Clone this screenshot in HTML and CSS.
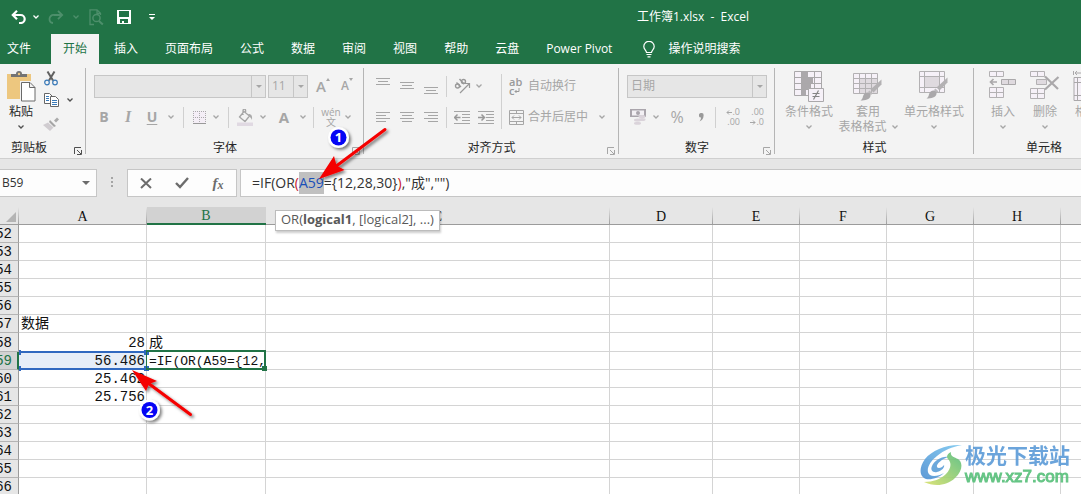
FILE: index.html
```html
<!DOCTYPE html>
<html lang="zh-CN">
<head>
<meta charset="utf-8">
<meta name="viewport" content="width=device-width, initial-scale=1">
<title>工作簿1.xlsx - Excel</title>
<link rel="stylesheet" href="styles.css">
</head>
<body>
<svg class="defs" aria-hidden="true">
  <symbol id="chev" viewBox="0 0 6 4"><path d="M.5.5 3 3 5.500.5" fill="none" stroke="currentColor" stroke-width="1.300"/></symbol>
  <symbol id="tri" viewBox="0 0 6 3"><path d="M0 0h6L3 3z" fill="currentColor"/></symbol>
  <symbol id="launch" viewBox="0 0 8 8"><path d="M.5 7V.5H7M3 3l4 4M7.500 3v4.500H3" fill="none" stroke="currentColor"/></symbol>
  <symbol id="brush" viewBox="0 0 22 22"><path d="M21.500.5v5l-8 8-3-3z" fill="#b3b1b3"/><path d="M9.500 11.500l3 3-1.500 1.500-3-3z" fill="#bcbabc"/><path d="M7.500 13.500c2 0 3.500 1.500 3 3.500-.8 3.500-5 4.500-10 4.500 2.500-1.500 2-3.500 3-5.500.8-1.500 2-2.500 4-2.500z" fill="#aaa8aa"/></symbol>
</svg>

<header class="top">
  <div class="titlebar">
    <div class="qat">
      <button class="qbtn" aria-label="撤消"><svg width="16" height="14" viewBox="0 0 16 14"><path d="M1.500 5h8.200a4 4 0 0 1 0 8H8M6 .8 1.800 5 6 9.200" fill="none" stroke="#fff" stroke-width="2.200"/></svg></button>
      <button class="qchev" aria-label="撤消选项"><svg width="6" height="4"><use href="#chev"/></svg></button>
      <button class="qbtn dim" aria-label="恢复"><svg width="16" height="14" viewBox="0 0 16 14"><path d="M14 5H6a4 4 0 0 0-4.500 4A4 4 0 0 0 5 13M10 .8 14.200 5 10 9.200" fill="none" stroke="currentColor" stroke-width="1.800"/></svg></button>
      <button class="qchev dim" aria-label="恢复选项"><svg width="6" height="4"><use href="#chev"/></svg></button>
      <button class="qbtn dim" aria-label="打印预览"><svg width="15" height="17" viewBox="0 0 15 17"><path d="M5 15.500H1V.8h7l3.500 3.500V6M8 .8v3.700h3.500" fill="none" stroke="currentColor" stroke-width="1.300"/><circle cx="7.500" cy="9" r="3.600" fill="none" stroke="currentColor" stroke-width="1.500"/><path d="M10 12l3.800 3.500" stroke="currentColor" stroke-width="2"/></svg></button>
      <button class="qbtn" aria-label="保存"><svg width="14" height="14" viewBox="0 0 14 14"><path d="M0 0h14v14H0zM2 1v6h10V1zM3 9v4h2v-2h2v2h4V9z" fill="#fff" fill-rule="evenodd"/></svg></button>
      <button class="qbtn" aria-label="自定义快速访问工具栏"><svg width="6" height="6" viewBox="0 0 6 6"><path d="M0 0h6v1H0zM0 3h6L3 6z" fill="#fff"/></svg></button>
    </div>
    <h1 class="doc">工作簿1.xlsx&nbsp; -&nbsp; Excel</h1>
  </div>
  <nav class="tabs">
    <button class="tab file">文件</button>
    <button class="tab active">开始</button>
    <button class="tab">插入</button>
    <button class="tab">页面布局</button>
    <button class="tab">公式</button>
    <button class="tab">数据</button>
    <button class="tab">审阅</button>
    <button class="tab">视图</button>
    <button class="tab">帮助</button>
    <button class="tab">云盘</button>
    <button class="tab">Power Pivot</button>
    <button class="tab tell"><svg width="12" height="17" viewBox="0 0 12 17"><path d="M3.500 11.500c0-2-2.700-3-2.700-6a5.200 5.200 0 0 1 10.400 0c0 3-2.700 4-2.700 6zM3.500 13.500h5M4.500 15.800h3" fill="none" stroke="#fff" stroke-width="1.200"/></svg>操作说明搜索</button>
  </nav>
</header>

<section class="ribbon">
  <div class="group clip">
    <div class="body row">
      <button class="big paste"><svg width="29" height="31" viewBox="0 0 29 31"><path d="M0 3h24v25H0z" fill="#edc77f"/><path d="M4 6V3h5a3 3 0 0 1 6 0h5v3z" fill="#737373"/><circle cx="12" cy="3" r="1.200" fill="#edc77f"/><path d="M13 10h11l5 5v16H13z" fill="#f3f3f3"/><path d="M14.500 11.500h8.500l5 5v13.500H14.500zM22.500 11.500v5H28" fill="#fff" stroke="#6a6a6a"/></svg><span>粘贴</span><svg class="c" width="6" height="4"><use href="#chev"/></svg></button>
      <div class="stack">
        <button class="small" aria-label="剪切"><svg width="14" height="15" viewBox="0 0 14 15"><path d="M3.500.5 9 9.500M10.500.5 5 9.500" stroke="#606060" stroke-width="2"/><circle cx="3" cy="11.500" r="2.300" fill="none" stroke="#3a7ab8" stroke-width="1.200"/><circle cx="11" cy="11.500" r="2.300" fill="none" stroke="#3a7ab8" stroke-width="1.200"/></svg></button>
        <div class="row">
          <button class="small" aria-label="复制"><svg width="15" height="14" viewBox="0 0 15 14"><path d="M.5.500h5l2.500 2.500v7.500H.5z" fill="#fff" stroke="#666"/><path d="M2 3.500h3M2 5.500h3M2 7.500h3" stroke="#3a7ab8"/><path d="M6.500 3.500h5l3 3v7h-8z" fill="#fff" stroke="#666"/><path d="M8 7.500h5M8 9.500h5M8 11.500h5" stroke="#3a7ab8"/></svg></button>
          <button class="chev dark" aria-label="复制选项"><svg width="6" height="4"><use href="#chev"/></svg></button>
        </div>
        <button class="small" aria-label="格式刷"><svg width="16" height="14" viewBox="0 0 16 14"><path d="M11 3.500 14 .5l2 2-3 3z" fill="#aaa"/><path d="M7 3l6 6-2 1-5-5z" fill="#a5a5a5"/><path d="M5 5.500l5.500 5L7 14 0 8z" fill="#d0ccd0"/></svg></button>
      </div>
    </div>
    <div class="foot"><span>剪贴板</span><button class="launcher dark" aria-label="剪贴板设置"><svg width="8" height="8"><use href="#launch"/></svg></button></div>
  </div>

  <div class="group font">
    <div class="body">
      <div class="line first">
        <div class="combo name"><input type="text" aria-label="字体" disabled><button aria-label="字体列表"><svg width="6" height="3"><use href="#tri"/></svg></button></div>
        <div class="combo size"><input type="text" aria-label="字号" value="11" disabled><button aria-label="字号列表"><svg width="6" height="3"><use href="#tri"/></svg></button></div>
        <button class="ic grow" aria-label="增大字号"><span>A</span><svg width="4" height="3" viewBox="0 0 4 3"><path d="M0 3 2 0l2 3z" fill="currentColor"/></svg></button>
        <button class="ic shrink" aria-label="减小字号"><span>A</span><svg width="4" height="3" viewBox="0 0 4 3"><path d="M0 0l2 3 2-3z" fill="currentColor"/></svg></button>
      </div>
      <div class="line">
        <button class="ic"><b>B</b></button>
        <button class="ic"><i>I</i></button>
        <button class="ic"><u>U</u></button>
        <button class="chev" aria-label="下划线选项"><svg width="6" height="4"><use href="#chev"/></svg></button>
        <span class="sep"></span>
        <button class="ic w20" aria-label="边框"><svg width="13" height="13" viewBox="0 0 13 13"><path d="M0 0h13v12H0z" fill="#f4eef6"/><path d="M0 .5h13M.5 0v12M6.500 0v12M12.500 0v12M0 6.500h13" stroke="#aaa" stroke-dasharray="1 1"/><path d="M0 12.500h13" stroke="#999"/></svg></button>
        <button class="chev" aria-label="边框选项"><svg width="6" height="4"><use href="#chev"/></svg></button>
        <span class="sep"></span>
        <button class="ic w22" aria-label="填充颜色"><svg width="17" height="17" viewBox="0 0 17 17"><path d="M7 2.500 12.500 7 8 12.500 2.500 8zM6 6V1.500a1.300 1.300 0 0 1 2.600 0V5" fill="none" stroke="#a5a5a5" stroke-width="1.300"/><path d="M11.500 5c3 0 4 2 3.500 6-1-2-2-3.500-4-4z" fill="#aaa"/><path d="M0 13.500h16V17H0z" fill="#e0d9e2"/></svg></button>
        <button class="chev" aria-label="填充颜色选项"><svg width="6" height="4"><use href="#chev"/></svg></button>
        <button class="ic w28"><span class="colorA">A</span></button>
        <button class="chev c10" aria-label="字体颜色选项"><svg width="6" height="4"><use href="#chev"/></svg></button>
        <span class="sep"></span>
        <button class="ic pinyin"><span>wén</span><span>文</span></button>
        <button class="chev c10" aria-label="拼音选项"><svg width="6" height="4"><use href="#chev"/></svg></button>
      </div>
    </div>
    <div class="foot"><span>字体</span><button class="launcher" aria-label="字体设置"><svg width="8" height="8"><use href="#launch"/></svg></button></div>
  </div>

  <div class="group align">
    <div class="body row">
      <div>
        <div class="line first">
          <button class="ic" aria-label="顶端对齐"><svg width="14" height="17" viewBox="0 0 14 17"><path d="M0 .5h14M2 3.500h10M0 6.500h14" stroke="currentColor"/></svg></button>
          <button class="ic" aria-label="垂直居中"><svg width="14" height="17" viewBox="0 0 14 17"><path d="M0 4.500h14M2 7.500h10M0 10.500h14" stroke="currentColor"/></svg></button>
          <button class="ic" aria-label="底端对齐"><svg width="14" height="17" viewBox="0 0 14 17"><path d="M0 9.500h14M2 12.500h10M0 15.500h14" stroke="currentColor"/></svg></button>
          <span class="sep s7"></span>
          <button class="ic" aria-label="方向"><svg width="17" height="16" viewBox="0 0 17 16"><circle cx="3.500" cy="8" r="2" fill="none" stroke="#999" stroke-width="1.400"/><path d="M2.500 4.500 7 9M5.500 1 10 6" stroke="#999" stroke-width="1.400"/><circle cx="9.500" cy="3.500" r="2" fill="none" stroke="#999" stroke-width="1.400"/><path d="M6 15 15 6M11 5.500h4.500V10" fill="none" stroke="#999" stroke-width="1.200"/></svg></button>
          <button class="chev c10" aria-label="方向选项"><svg width="6" height="4"><use href="#chev"/></svg></button>
        </div>
        <div class="line">
          <button class="ic" aria-label="左对齐"><svg width="14" height="11" viewBox="0 0 14 11"><path d="M0 .5h14M0 3.500h10M0 6.500h14M0 9.500h10" stroke="currentColor"/></svg></button>
          <button class="ic" aria-label="居中"><svg width="14" height="11" viewBox="0 0 14 11"><path d="M0 .5h14M2 3.500h10M0 6.500h14M2 9.500h10" stroke="currentColor"/></svg></button>
          <button class="ic" aria-label="右对齐"><svg width="14" height="11" viewBox="0 0 14 11"><path d="M0 .5h14M4 3.500h10M0 6.500h14M4 9.500h10" stroke="currentColor"/></svg></button>
          <span class="sep s7"></span>
          <button class="ic" aria-label="减少缩进"><svg width="16" height="13" viewBox="0 0 16 13"><path d="M0 .5h16M8 3.500h8M8 6.500h8M8 9.500h8M0 12.500h16" stroke="currentColor"/><path d="M6.500 6.500H1M3.500 3.500l-3 3 3 3" fill="none" stroke="#999" stroke-width="1.500"/></svg></button>
          <button class="ic" aria-label="增加缩进"><svg width="16" height="13" viewBox="0 0 16 13"><path d="M0 .5h16M8 3.500h8M8 6.500h8M8 9.500h8M0 12.500h16" stroke="currentColor"/><path d="M0 6.500h6M3.500 3.500l3 3-3 3" fill="none" stroke="#999" stroke-width="1.500"/></svg></button>
        </div>
      </div>
      <span class="sep s7 tall"></span>
      <div>
        <div class="line first"><button class="text"><span class="wrap"><span>ab</span><span class="row">c<svg width="6" height="8" viewBox="0 0 6 8"><path d="M5 2v3.500H1M2.500 4 1 5.500 2.500 7" fill="none" stroke="currentColor"/></svg></span></span><span>自动换行</span></button></div>
        <div class="line"><button class="text"><svg width="15" height="15" viewBox="0 0 15 15"><path d="M.5.500h14v14H.5zM.5 3.500h14M.5 11.500h14M7.500.5v3M7.500 11.500v3M3 7.500h9M5 5.500l-2 2 2 2M10 5.500l2 2-2 2" fill="none" stroke="currentColor"/></svg><span>合并后居中</span></button><button class="chev wide" aria-label="合并选项"><svg width="6" height="4"><use href="#chev"/></svg></button></div>
      </div>
    </div>
    <div class="foot"><span>对齐方式</span><button class="launcher" aria-label="对齐设置"><svg width="8" height="8"><use href="#launch"/></svg></button></div>
  </div>

  <div class="group number">
    <div class="body">
      <div class="line first">
        <div class="combo fmt"><input type="text" aria-label="数字格式" value="日期" disabled><button aria-label="数字格式列表"><svg width="6" height="3"><use href="#tri"/></svg></button></div>
      </div>
      <div class="line">
        <button class="ic w22" aria-label="会计数字格式"><svg width="16" height="16" viewBox="0 0 16 16"><path d="M0 0h16v8H0z" fill="#aaa5ac"/><path d="M2 1.500h12v5H2z" fill="#f3f0f4"/><circle cx="8" cy="4" r="2" fill="#aaa5ac"/><ellipse cx="12" cy="7.500" rx="3.500" ry="1.500" fill="#dad3da"/><ellipse cx="12" cy="10.500" rx="3.500" ry="1.500" fill="#dad3da"/><ellipse cx="7.500" cy="11" rx="3.500" ry="1.500" fill="#dad3da"/><ellipse cx="7.500" cy="14.200" rx="3.500" ry="1.500" fill="#dad3da"/></svg></button>
        <button class="chev" aria-label="会计格式选项"><svg width="6" height="4"><use href="#chev"/></svg></button>
        <button class="ic w28"><span class="pct">%</span></button>
        <button class="ic w20" aria-label="千位分隔样式"><svg width="5" height="9" viewBox="0 0 5 9"><path d="M2.300 0A2.200 2.200 0 0 1 4.600 2.500C4.600 5.500 3 7.500.5 8.500 1.500 7 2 6 2 4.500A2.200 2.200 0 0 1 2.300 0z" fill="#999"/></svg></button>
        <span class="sep s9"></span>
        <button class="ic dec" aria-label="增加小数位数"><span class="row"><svg width="6" height="10" viewBox="0 0 6 10"><path d="M6 5.500H1M3 3.500l-2 2 2 2" fill="none" stroke="currentColor"/></svg>.0</span><span>.00</span></button>
        <button class="ic dec" aria-label="减少小数位数"><span>.00</span><span class="row"><svg width="6" height="10" viewBox="0 0 6 10"><path d="M0 5.500h5M3 3.500l2 2-2 2" fill="none" stroke="currentColor"/></svg>.0</span></button>
      </div>
    </div>
    <div class="foot"><span>数字</span><button class="launcher" aria-label="数字设置"><svg width="8" height="8"><use href="#launch"/></svg></button></div>
  </div>

  <div class="group styles">
    <div class="body row">
      <button class="big cond"><svg width="30" height="31" viewBox="0 0 30 31"><path d="M.5.500h27v24H.5z" fill="#f6f1f8"/><path d="M7 0h7v6H7zM7 6h12v6H7zM7 12h10v6H7zM7 18h5v7H7z" fill="#aba8ab"/><path d="M.5.500h27v24H.5zM7.500 0v25M20.500 0v25M0 6.500h28M0 12.500h28M0 18.500h28" fill="none" stroke="#aaa8aa"/><path d="M14.500 17.500h15v13h-15z" fill="#f6f1f8" stroke="#aaa8aa"/><path d="M18.500 22.500h7M18.500 25.500h7M24.500 19.500l-5 9" stroke="#858585" stroke-width="1.200"/></svg><span>条件格式</span><svg class="c" width="6" height="4"><use href="#chev"/></svg></button>
      <button class="big tabl"><svg width="30" height="31" viewBox="0 0 30 31"><path d="M.5 2.500h24v20H.5z" fill="#f6f1f8"/><path d="M6 7h19v15H6z" fill="#dfdadf"/><path d="M.5 2.500h24v20H.5zM6.500 2v20M12.500 2v20M18.500 2v20M0 7.500h25M0 12.500h25M0 17.500h25" fill="none" stroke="#b3b1b3"/><use href="#brush" x="7" y="8" width="22" height="22"/></svg><span>套用</span><span class="row">表格格式<svg class="c2" width="6" height="4"><use href="#chev"/></svg></span></button>
      <button class="big cell"><svg width="30" height="31" viewBox="0 0 30 31"><path d="M.5.500h25v21H.5z" fill="#f6f1f8"/><path d="M6 5h15v11H6z" fill="#dfdadf"/><path d="M.5.500h25v21H.5zM5.500 0v22M20.500 0v22M0 5.500h26M0 16.500h26" fill="none" stroke="#b3b1b3"/><use href="#brush" x="7" y="6" width="22" height="22"/></svg><span>单元格样式</span><svg class="c" width="6" height="4"><use href="#chev"/></svg></button>
    </div>
    <div class="foot"><span>样式</span></div>
  </div>

  <div class="group cells">
    <div class="body row">
      <button class="big cl"><svg width="28" height="31" viewBox="0 0 28 31"><path d="M.5.500h14v5H.5zM7.500.5v5M.5 16.500h14v10H.5zM7.500 16.500v10M.5 21.500h14" fill="#f6f1f8" stroke="#b3b1b3"/><path d="M12.500 8.500h14v5h-14zM19.500 8.500v5" fill="#dfdadf" stroke="#aaa8aa"/><path d="M8 11H2M4.500 8l-3 3 3 3" fill="none" stroke="#aaa8aa" stroke-width="1.700"/></svg><span>插入</span><svg class="c" width="6" height="4"><use href="#chev"/></svg></button>
      <button class="big cl"><svg width="30" height="31" viewBox="0 0 30 31"><path d="M.5.500h14v5H.5zM7.500.5v5M.5 17.500h14v10H.5zM7.500 17.500v10M.5 22.500h14" fill="#f6f1f8" stroke="#b3b1b3"/><path d="M6.500 8.500h10v5h-10z" fill="#dfdadf" stroke="#b3b1b3"/><path d="M15 5.500 28 18M28.500 6 15 18.500" stroke="#aaa8aa" stroke-width="2.200"/></svg><span>删除</span><svg class="c" width="6" height="4"><use href="#chev"/></svg></button>
      <button class="big cl"><svg width="28" height="31" viewBox="0 0 28 31"><path d="M.5 0v4M27.500 0v4M2 2h24M4 0 2 2l2 2" fill="none" stroke="#aaa8aa"/><path d="M1 6.500h26v23H1zM4.500 6.500v23M1 11.500h26M1 24.500h26" fill="#f6f1f8" stroke="#aaa8aa"/></svg><span>格式</span><svg class="c" width="6" height="4"><use href="#chev"/></svg></button>
    </div>
    <div class="foot"><span>单元格</span></div>
  </div>
</section>

<section class="fbar">
  <div class="namebox"><input type="text" value="B59" aria-label="名称框"><button aria-label="名称列表"><svg width="8" height="4" viewBox="0 0 6 3"><path d="M0 0h6L3 3z" fill="currentColor"/></svg></button></div>
  <svg class="dots" width="2" height="12" viewBox="0 0 2 12"><path d="M0 0h2v2H0zM0 4h2v2H0zM0 8h2v2H0z" fill="#a5a5a5"/></svg>
  <div class="fbtns">
    <button aria-label="取消"><svg width="12" height="11" viewBox="0 0 12 11"><path d="M1 .5 11 10M11 .5 1 10" stroke="#6c6c6c" stroke-width="2"/></svg></button>
    <button aria-label="输入"><svg width="14" height="12" viewBox="0 0 14 12"><path d="M1 6l4 4L13 1" fill="none" stroke="#6c6c6c" stroke-width="2.400"/></svg></button>
    <button class="fx" aria-label="插入函数"><i>f</i><i class="x">x</i></button>
  </div>
  <div class="formula" role="textbox" aria-label="编辑栏" contenteditable="true" spellcheck="false">=IF(OR<span class="red">(</span><span class="ref">A59</span>={12,28,30}<span class="red">)</span>,"成","")</div>
</section>

<main class="sheet">
  <table class="grid">
    <colgroup><col class="c0"><col class="ca"><col class="cb"><col class="cc"><col class="cd"><col class="ce"><col class="ce"><col class="ce"><col class="ce"><col class="ce"></colgroup>
    <thead><tr><th class="corner"><svg width="10" height="10" viewBox="0 0 10 10"><path d="M10 0v10H0z" fill="#b4b4b4"/></svg></th><th>A</th><th class="on">B</th><th>C</th><th>D</th><th>E</th><th>F</th><th>G</th><th>H</th><th>I</th></tr></thead>
    <tbody>
      <tr><th><span>52</span></th><td></td><td></td><td></td><td></td><td></td><td></td><td></td><td></td><td></td></tr>
      <tr><th><span>53</span></th><td></td><td></td><td></td><td></td><td></td><td></td><td></td><td></td><td></td></tr>
      <tr><th><span>54</span></th><td></td><td></td><td></td><td></td><td></td><td></td><td></td><td></td><td></td></tr>
      <tr><th><span>55</span></th><td></td><td></td><td></td><td></td><td></td><td></td><td></td><td></td><td></td></tr>
      <tr><th><span>56</span></th><td></td><td></td><td></td><td></td><td></td><td></td><td></td><td></td><td></td></tr>
      <tr><th><span>57</span></th><td>数据</td><td></td><td></td><td></td><td></td><td></td><td></td><td></td><td></td></tr>
      <tr class="r58"><th><span>58</span></th><td class="num">28</td><td>成</td><td></td><td></td><td></td><td></td><td></td><td></td><td></td></tr>
      <tr><th class="on"><span>59</span></th><td class="num source">56.486<span class="refbox"><i></i><i></i><i></i><i></i></span></td><td class="edit">=IF(OR(A59={12,<span class="cursor"></span></td><td></td><td></td><td></td><td></td><td></td><td></td><td></td></tr>
      <tr><th><span>60</span></th><td class="num">25.462</td><td></td><td></td><td></td><td></td><td></td><td></td><td></td><td></td></tr>
      <tr><th><span>61</span></th><td class="num">25.756</td><td></td><td></td><td></td><td></td><td></td><td></td><td></td><td></td></tr>
      <tr><th><span>62</span></th><td></td><td></td><td></td><td></td><td></td><td></td><td></td><td></td><td></td></tr>
      <tr><th><span>63</span></th><td></td><td></td><td></td><td></td><td></td><td></td><td></td><td></td><td></td></tr>
      <tr><th><span>64</span></th><td></td><td></td><td></td><td></td><td></td><td></td><td></td><td></td><td></td></tr>
      <tr><th><span>65</span></th><td></td><td></td><td></td><td></td><td></td><td></td><td></td><td></td><td></td></tr>
      <tr><th><span>66</span></th><td></td><td></td><td></td><td></td><td></td><td></td><td></td><td></td><td></td></tr>
    </tbody>
  </table>
  <div class="brand">
    <svg width="43" height="42" viewBox="0 0 43 42">
      <defs><linearGradient id="g1" x1="1" y1="0" x2="0" y2="1"><stop offset="0" stop-color="#7cc8f0"/><stop offset="1" stop-color="#4d8fd2"/></linearGradient><linearGradient id="g2" x1="1" y1="0" x2="0" y2="1"><stop offset="0" stop-color="#55bd7c"/><stop offset="1" stop-color="#d9e06a"/></linearGradient></defs>
      <path d="M42 1C27 0 12 6 5 15-2 25 0 33 6 35c5 1.500 14-2 18-6-5 3-11 4-14 2-5-4-1-13 7-19C24 6 32 3 42 1z" fill="url(#g1)"/>
      <path d="M28 13c-6-1-14 4-16 9-2 4 1 7 5 6 5-1 8-5 7-7-2 3-6 4-7 2-1-3 5-8 11-10z" fill="#5c9fd8"/>
      <path d="M31 8c-4 2-5 5-3 7 4 4 3 10-2 15-5 5-13 8-22 8 10 5 23 4 31-4 8-7 8-16 3-19-4-2-8-3-7-7z" fill="url(#g2)"/>
    </svg>
    <div><strong>极光下载站</strong><span>www.xz7.com</span></div>
  </div>
</main>

<div class="tip">OR(<b>logical1</b>, [logical2], ...)</div>
<svg class="marks" width="400" height="430" viewBox="0 0 400 430" aria-hidden="true">
  <defs><filter id="sh" x="-20%" y="-20%" width="150%" height="150%"><feDropShadow dx="2" dy="2" stdDeviation="1.500" flood-opacity=".5"/></filter></defs>
  <g filter="url(#sh)">
    <path d="M385 129.500 335 167" stroke="#f50400" stroke-width="3" stroke-linecap="round"/>
    <path d="M319 179 334 156 336.500 165.500 344.500 170z" fill="#f50400"/>
    <path d="M190.500 414.500 148 383" stroke="#f50400" stroke-width="3" stroke-linecap="round"/>
    <path d="M132 370 157 381 149 384 146 391z" fill="#f50400"/>
    <circle cx="338.500" cy="137.500" r="10.500" fill="#fff"/><circle cx="149.500" cy="410" r="10.500" fill="#fff"/>
  </g>
  <circle cx="338.500" cy="137.500" r="8" fill="#0505f5"/><circle cx="149.500" cy="410" r="8" fill="#0505f5"/>
  <text class="n" x="338.500" y="142">1</text><text class="n" x="149.500" y="415">2</text>
</svg>
</body>
</html>
```
FILE: styles.css
```css
* { box-sizing: border-box; }
body {
  margin: 0;
  height: 100vh;
  position: relative;
  display: flex;
  flex-direction: column;
  overflow: hidden;
  background: #fff;
  color: #262626;
  font: 12px/16px "Open Sans", "Noto Sans CJK SC", sans-serif;
}
button, input { font: inherit; color: inherit; border: 0; padding: 0; margin: 0; background: none; border-radius: 0; }
button { display: flex; align-items: center; justify-content: center; flex: none; }
svg { display: block; flex: none; }
.defs { position: absolute; width: 0; height: 0; }
.row { display: flex; }

.top { background: #217346; color: #fff; flex: none; }
.titlebar { display: flex; align-items: center; height: 34px; }
.qat { display: flex; align-items: center; padding-left: 8px; }
.qbtn { width: 28px; height: 24px; }
.qbtn:first-child { width: 22px; }
.qchev { width: 12px; height: 24px; }
.dim { color: #4d8f6b; }
.doc { margin: 0 332px 0 auto; font-size: 12px; font-weight: 400; }
.tabs { display: flex; gap: 3px; height: 30px; }
.tab { padding: 0 12px; white-space: nowrap; }
.tab.file { padding: 0 17px 0 7px; }
.tab.active { background: #f3f3f3; color: #217346; }
.tab.tell { gap: 13px; padding-left: 16px; }

.ribbon { display: flex; flex: none; background: #f3f3f3; border-bottom: 1px solid #cfcfcf; overflow: hidden; color: #a6a6a6; }
.group { position: relative; flex: none; display: flex; flex-direction: column; padding: 7px 0 1px; }
.group::after { content: ""; position: absolute; right: 0; top: 4px; bottom: 4px; width: 1px; background: #b5b5b5; }
.body { height: 66px; }
.foot { height: 20px; padding-top: 1px; display: flex; align-items: center; justify-content: center; color: #262626; position: relative; }
.launcher { position: absolute; right: 4px; bottom: 2px; width: 8px; height: 8px; color: #a6a6a6; }
.dark { color: #505050; }
.clip { width: 86px; }
.font { width: 278px; }
.align { width: 255px; }
.number { width: 156px; }
.styles { width: 199px; }
.cells { width: 140px; }

.big { flex-direction: column; justify-content: flex-start; height: 66px; white-space: nowrap; line-height: 15px; }
.big > svg:first-child { margin-bottom: 2px; }
.big .c { margin-top: 6px; }
.c2 { margin: 6px 0 0 5px; }
.paste { width: 38px; color: #262626; }
.paste .c { color: #505050; }
.clip .foot { padding-right: 28px; }
.clip .body { padding-left: 2px; }
.stack { display: grid; grid-template-rows: 14px 30px 17px; align-items: center; }
.small { width: 22px; }
.stack .chev { width: 16px; }
.line { display: flex; align-items: center; height: 22px; }
.line.first { margin: 4px 0 9px; }
.font .line { padding-left: 6px; }
.font .line.first { padding-left: 8px; }
.ic { width: 24px; height: 22px; font-size: 14px; }
.ic u { text-underline-offset: 2px; }
.ic b, .ic u, .colorA { font-weight: 700; }
.ic i { font-family: "Liberation Serif", serif; font-size: 16px; font-weight: 700; }
.colorA { font-size: 15px; }
.w20 { width: 20px; }
.w22 { width: 22px; }
.w28 { width: 28px; }
.chev { width: 14px; height: 22px; }
.chev.c10 { width: 10px; }
.chev.wide { width: 28px; }
.sep { width: 11px; height: 21px; flex: none; background: linear-gradient(#d0d0d0, #d0d0d0) center / 1px 100% no-repeat; }
.s7 { width: 7px; }
.s9 { width: 9px; }
.tall { height: 55px; margin-top: 3px; }
.combo { display: flex; height: 23px; border: 1px solid #c6c6c6; background: #e6e6e6; }
.combo input { flex: 1; min-width: 0; padding-left: 3px; color: #a6a6a6; }
.combo button { width: 14px; border-left: 1px solid #c6c6c6; }
.name { width: 172px; margin-right: 2px; }
.size { width: 40px; margin-right: 3px; }
.fmt { width: 140px; }
.grow, .shrink { align-items: flex-start; line-height: 22px; font-weight: 600; }
.grow { font-size: 15px; }
.shrink { font-size: 12px; }
.grow svg, .shrink svg { margin-top: 3px; }
.pinyin, .dec { flex-direction: column; font-size: 10px; line-height: 10px; }
.dec { font-size: 9px; align-items: flex-end; padding-right: 4px; }
.pct { font-size: 16px; }
.align .body { padding-left: 7px; }
.wrap { display: flex; flex-direction: column; align-items: flex-start; width: 15px; font-size: 11px; font-weight: 600; line-height: 9px; color: #999; }
.text { gap: 4px; padding-left: 4px; height: 22px; }
.number .body { padding-left: 8px; }
.styles .body { padding-left: 7px; }
.cond { width: 54px; }
.tabl { width: 64px; }
.cell { width: 68px; }
.cells .body { padding-left: 8px; }
.cl { width: 42px; }

.fbar { display: flex; align-items: center; height: 48px; flex: none; background: #e6e6e6; padding: 10px 0; color: #333; }
.namebox, .fbtns, .formula { height: 28px; background: #fdfdfd; border: 1px solid #c6c6c6; display: flex; align-items: center; }
.namebox { width: 97px; border-left: 0; }
.namebox input { flex: 1; min-width: 0; padding-left: 2px; }
.namebox button { width: 20px; height: 26px; color: #6c6c6c; }
.dots { margin: 0 14px; }
.fbtns { width: 110px; margin-right: 3px; }
.fbtns button { width: 36px; height: 26px; }
.fx i { font: italic 700 15px/20px "Liberation Serif", serif; color: #6c6c6c; }
.fx .x { font-size: 12px; padding-top: 4px; }
.formula { flex: 1; border-right: 0; padding-left: 11px; font-size: 14px; white-space: pre; }
.ref { background: #c0c0c0; color: #1a4fb8; line-height: 22px; }
.red { color: #c8202c; }

.sheet { position: relative; flex: 1; min-height: 0; overflow: hidden; }
.grid { table-layout: fixed; width: 1148px; border-collapse: separate; border-spacing: 0; font-family: "Liberation Mono", "Noto Sans CJK SC", monospace; font-size: 14px; line-height: 17px; color: #111; }
.c0 { width: 19px; }
.ca { width: 128px; }
.cb { width: 119px; }
.cc { width: 344px; }
.cd { width: 103px; }
.ce { width: 87px; }
.grid tr { height: 18px; }
.grid .r58 { height: 19px; }
.grid th, .grid td { padding: 0; height: 17px; border-right: 1px solid #d4d4d4; border-bottom: 1px solid #d4d4d4; font-weight: 400; white-space: nowrap; }
.grid td { padding: 2px 1px 0 2px; line-height: 15px; text-align: left; vertical-align: bottom; }
.grid thead th { background: linear-gradient(#e6e6e6, #a0a0a0) right / 1px 100% no-repeat #e6e6e6; border-right: 0; border-bottom-color: #9b9b9b; font-family: "Liberation Serif", serif; line-height: 15px; padding: 2px 1px 0 0; }
.grid thead .on { background: #d2d2d2; color: #217346; border-bottom: 2px solid #217346; line-height: 14px; }
.grid .corner svg { margin: 1px 0 0 6px; }
.grid tbody th { background: #e6e6e6; border-right-color: #9b9b9b; border-bottom-color: #b4b4b4; vertical-align: bottom; }
.grid tbody th span { display: flex; justify-content: flex-end; padding: 2px 6px 0 0; line-height: 15px; }
.grid tbody .on { background: #d2d2d2; color: #217346; border-right: 2px solid #217346; }
.grid tbody .on span { padding-right: 5px; }
.grid .num { text-align: right; }
.source { position: relative; background: #e6edf8; }
.refbox { position: absolute; inset: -1px -1px -1px 0; border: solid #3068c0; border-width: 2px 0; }
.refbox i { position: absolute; width: 5px; height: 5px; background: #3068c0; }
.refbox i:nth-child(1) { left: 0; top: -3px; width: 2px; }
.refbox i:nth-child(2) { right: -2px; top: -3px; }
.refbox i:nth-child(3) { left: 0; bottom: -3px; width: 2px; }
.refbox i:nth-child(4) { right: -2px; bottom: -3px; }
.grid .edit { position: relative; font-size: 13px; }
.cursor { position: absolute; inset: -2px -1px -1px -1px; border: 2px solid #217346; border-left-width: 1px; }
.cursor::after { content: ""; position: absolute; right: -3px; bottom: -3px; width: 5px; height: 5px; background: #217346; }

.brand { position: absolute; right: 11px; bottom: 8px; display: flex; align-items: center; gap: 2px; opacity: .9; }
.brand div { display: flex; flex-direction: column; }
.brand strong { font-size: 21px; line-height: 24px; color: #5b9bd8; }
.brand span { font: 17px/19px "Liberation Sans", sans-serif; color: #55bf78; -webkit-text-stroke: 1px #55bf78; }

.tip { position: absolute; left: 275px; top: 210px; height: 21px; padding: 0 5px; font-size: 13px; line-height: 17px; background: #fff; border: 1px solid #bcbcbc; box-shadow: 1px 2px 2px #0003; color: #595959; white-space: nowrap; }
.marks { position: absolute; left: 0; top: 0; pointer-events: none; }
.n { font: 700 13px "Open Sans", sans-serif; fill: #fff; text-anchor: middle; }
```
